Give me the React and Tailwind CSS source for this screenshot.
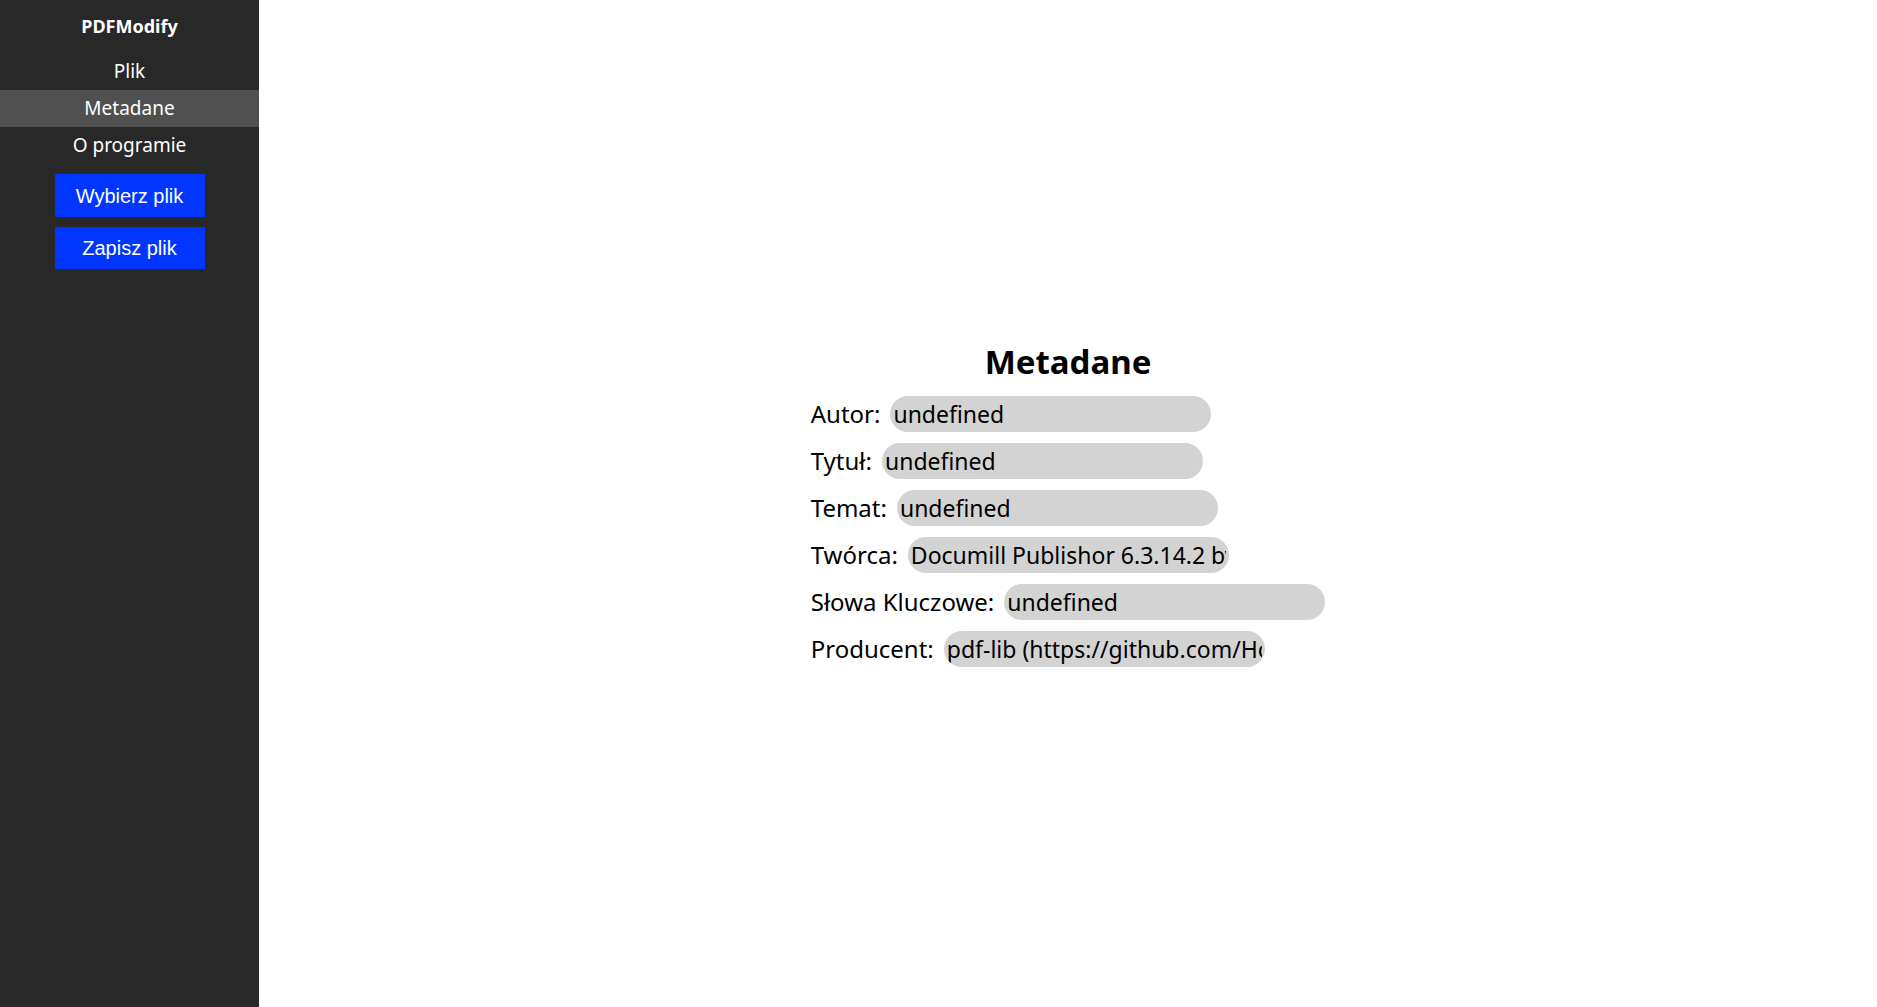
export default function App() {
  const fields = [
    { label: "Autor:", value: "undefined" },
    { label: "Tytuł:", value: "undefined" },
    { label: "Temat:", value: "undefined" },
    { label: "Twórca:", value: "Documill Publishor 6.3.14.2 by Documill" },
    { label: "Słowa Kluczowe:", value: "undefined" },
    { label: "Producent:", value: "pdf-lib (https://github.com/Hopding/pdf-lib)" },
  ];

  const nav = ["Plik", "Metadane", "O programie"];

  return (
    <div className="flex h-[1007px] w-full bg-white font-['Noto_Sans',sans-serif]">
      <aside className="flex w-[259px] shrink-0 flex-col bg-[#282828] text-white">
        <div className="pt-[14px] pb-[15px] text-center text-[18px] font-bold leading-[24px]">
          PDFModify
        </div>
        {nav.map((item) => (
          <div
            key={item}
            className={`h-[37px] text-center text-[19px] leading-[37px] ${
              item === "Metadane" ? "bg-[#505050]" : ""
            }`}
          >
            {item}
          </div>
        ))}
        <div className="mt-[10px] flex flex-col items-center gap-[10px] font-['Liberation_Sans',sans-serif]">
          <button className="h-[43px] w-[150px] bg-[#0036ff] text-[20px] text-white">
            Wybierz plik
          </button>
          <button className="h-[42px] w-[150px] bg-[#0036ff] text-[20px] text-white">
            Zapisz plik
          </button>
        </div>
      </aside>

      <main className="flex flex-1 items-center justify-center">
        <div className="flex flex-col">
          <h1 className="mb-[13px] text-center text-[33px] font-bold leading-[43px] text-black">
            Metadane
          </h1>
          <div className="flex flex-col gap-[11px]">
            {fields.map((f) => (
              <div key={f.label} className="flex items-center gap-[10px]">
                <span className="text-[24px] leading-[36px] text-black">{f.label}</span>
                <input
                  readOnly
                  value={f.value}
                  className="h-[36px] w-[321px] rounded-full bg-[#d3d3d3] px-[3px] text-[23px] text-black outline-none"
                />
              </div>
            ))}
          </div>
        </div>
      </main>
    </div>
  );
}
